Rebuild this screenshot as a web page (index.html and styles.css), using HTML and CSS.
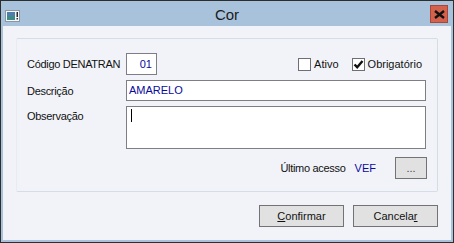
FILE: index.html
```html
<!DOCTYPE html>
<html lang="pt-BR">
<head>
    <meta charset="UTF-8">
    <title>Cor</title>
    <link rel="stylesheet" href="styles.css">
</head>
<body>

<div class="window">
    <div class="titlebar">
        <div class="title-left">
            <svg class="app-icon" width="15" height="12" viewBox="0 0 15 12">
                <rect x="0.5" y="0.5" width="14" height="11" fill="#f4f6f8" stroke="#8a96a4"/>
                <rect x="2" y="2" width="8" height="8" fill="#3d8a86"/>
                <rect x="2" y="2" width="8" height="4" fill="#4f7fa8"/>
                <rect x="11.5" y="2" width="1.5" height="5" fill="#2b2b2b"/>
                <rect x="11.5" y="8" width="1.5" height="1.5" fill="#2b2b2b"/>
            </svg>
        </div>
        <div class="title">Cor</div>
        <div class="title-right">
            <button class="close">
                <svg width="11" height="9" viewBox="0 0 11 9">
                    <path d="M1 1 L10 8 M10 1 L1 8" stroke="#111" stroke-width="2.4" fill="none"/>
                </svg>
            </button>
        </div>
    </div>

    <div class="client">
        <div class="group">
            <div class="row">
                <span class="label">Código DENATRAN</span>
                <div class="field code">01</div>
                <div class="checks">
                    <label class="check"><span class="box"></span>Ativo</label>
                    <label class="check"><span class="box checked">
                        <svg width="11" height="11" viewBox="0 0 11 11">
                            <path d="M1.5 5.5 L4.2 8.2 L9.5 2" stroke="#111" stroke-width="2.4" fill="none"/>
                        </svg>
                    </span>Obrigatório</label>
                </div>
            </div>
            <div class="row">
                <span class="label">Descrição</span>
                <div class="field wide">AMARELO</div>
            </div>
            <div class="row top">
                <span class="label label-top">Observação</span>
                <div class="field wide memo"><span class="caret"></span></div>
            </div>
            <div class="row end">
                <span class="label">Último acesso</span>
                <span class="value">VEF</span>
                <button class="button small">...</button>
            </div>
        </div>

        <div class="actions">
            <button class="button"><u>C</u>onfirmar</button>
            <button class="button">Cancela<u>r</u></button>
        </div>
    </div>
</div>

</body>
</html>
```

FILE: styles.css
```css
* {
    margin: 0;
    padding: 0;
    box-sizing: border-box;
}

body {
    font-family: 'Liberation Sans', Arial, sans-serif;
    font-size: 11px;
    color: #111;
    background: #a9c2dc;
}

.window {
    width: 454px;
    height: 243px;
    border: 1px solid #2d2d2d;
    background: #a9c2dc;
    padding: 0 2px 2px 2px;
    display: flex;
    flex-direction: column;
}

.titlebar {
    height: 25px;
    display: grid;
    grid-template-columns: 1fr auto 1fr;
    align-items: center;
}

.title-left {
    padding: 4px 0 0 2px;
    display: flex;
}

.title {
    font-size: 15px;
    color: #1b1b1b;
    padding-top: 2px;
}

.title-right {
    display: flex;
    justify-content: flex-end;
    padding-right: 3px;
}

.close {
    width: 18px;
    height: 18px;
    background: #d3614c;
    border: 1px solid #a9463a;
    display: flex;
    align-items: center;
    justify-content: center;
    margin-top: 1px;
}

.client {
    flex: 1;
    background: #f1f3f8;
    padding: 12px 13px 13px 13px;
    display: flex;
    flex-direction: column;
}

.group {
    border: 1px solid #d5dee5;
    border-left-color: #e6ecf0;
    border-radius: 2px;
    width: 422px;
    padding: 14px 10px 12px 10px;
    display: flex;
    flex-direction: column;
    gap: 5px;
}

.row {
    display: flex;
    align-items: center;
}

.row.top {
    align-items: flex-start;
}

.row.end {
    justify-content: flex-end;
    margin-top: 3px;
}

.label {
    width: 99px;
    flex-shrink: 0;
    white-space: nowrap;
    letter-spacing: -0.3px;
}

.label-top {
    padding-top: 4px;
}

.row.end .label {
    width: auto;
}

.field {
    background: #fff;
    border: 1px solid #7d7f85;
    color: #0a0a9c;
    height: 21px;
    line-height: 19px;
    padding: 0 2px;
}

.code {
    width: 31px;
    height: 22px;
    line-height: 20px;
    text-align: right;
    padding-right: 4px;
}

.wide {
    width: 300px;
}

.memo {
    height: 43px;
    padding: 2px 4px;
}

.caret {
    display: block;
    width: 1px;
    height: 13px;
    background: #000;
}

.checks {
    margin-left: auto;
    display: flex;
    gap: 13px;
    padding-right: 5px;
}

.check {
    display: flex;
    align-items: center;
    gap: 3px;
}

.box {
    width: 13px;
    height: 13px;
    border: 1px solid #6d6f74;
    background: #fff;
    display: flex;
    align-items: center;
    justify-content: center;
}

.value {
    color: #0a0a9c;
    margin-left: 9px;
    margin-right: 19px;
}

.button {
    width: 85px;
    height: 22px;
    background: #e1e1e1;
    border: 1px solid #737373;
    font-family: inherit;
    font-size: 11px;
    color: #111;
}

.button.small {
    width: 32px;
    color: #444;
}

.actions {
    margin-top: 13px;
    display: flex;
    justify-content: flex-end;
    gap: 9px;
}
```
